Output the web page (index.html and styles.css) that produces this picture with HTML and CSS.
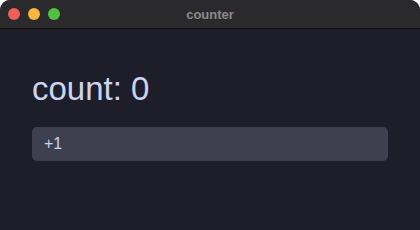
FILE: index.html
```html
<!DOCTYPE html>
<html lang="en">
<head>
    <meta charset="UTF-8">
    <title>counter</title>
    <link rel="stylesheet" href="styles.css">
</head>
<body>
    <div class="window">
        <div class="titlebar">
            <div class="lights">
                <span class="light red"></span>
                <span class="light yellow"></span>
                <span class="light green"></span>
            </div>
            <div class="title">counter</div>
        </div>
        <div class="content">
            <h1 class="count">count: 0</h1>
            <button class="inc">+1</button>
        </div>
    </div>
</body>
</html>
```

FILE: styles.css
```css
html, body {
    margin: 0;
    padding: 0;
    background: #ffffff;
}

.window {
    width: 420px;
    height: 230px;
    display: flex;
    flex-direction: column;
    background: #1e1e2b;
    border-radius: 10px 10px 0 0;
    overflow: hidden;
    font-family: "Liberation Sans", Arial, sans-serif;
}

.titlebar {
    height: 28px;
    position: relative;
    display: flex;
    align-items: center;
    background: #2a2a2c;
    border-bottom: 1px solid #0c0c0e;
}

.lights {
    display: flex;
    gap: 8px;
    padding-left: 8px;
}

.light {
    width: 12px;
    height: 12px;
    border-radius: 50%;
}

.red { background: #ed5f57; }
.yellow { background: #f5b73e; }
.green { background: #4fc141; }

.title {
    position: absolute;
    left: 0;
    right: 0;
    text-align: center;
    color: #8b8b8d;
    font-size: 13px;
    font-weight: 700;
}

.content {
    padding: 0 32px;
}

.count {
    margin: 40px 0 0;
    color: #cdd4f2;
    font-size: 33px;
    font-weight: 400;
    line-height: 40px;
}

.inc {
    display: block;
    width: 100%;
    height: 34px;
    margin-top: 18px;
    padding: 0 12px;
    border: none;
    border-radius: 5px;
    background: #3e404f;
    color: #cdd4f2;
    font-family: inherit;
    font-size: 16px;
    text-align: left;
}
```
